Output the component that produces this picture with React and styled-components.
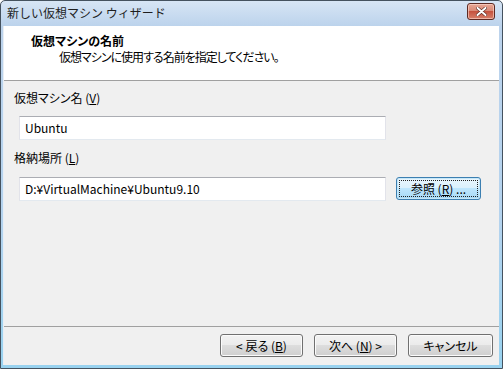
import React from "react";
import styled, { createGlobalStyle } from "styled-components";

const Global = createGlobalStyle`
  html, body { margin: 0; padding: 0; background: #ffffff; }
  body { font-family: "Noto Sans CJK JP", "Noto Sans", sans-serif; }
  * { box-sizing: border-box; }
`;

const Window = styled.div`
  width: 503px;
  height: 369px;
  border: 1px solid #45525f;
  border-radius: 5px 5px 0 0;
  background: linear-gradient(to bottom, #d7e5f5 0px, #bcd3ec 25px, #b4d3ee 60%, #98d2ef 100%);
  display: flex;
  flex-direction: column;
  padding: 0 3px 3px 2px;
  overflow: hidden;
`;

const TitleBar = styled.div`
  height: 25px;
  display: flex;
  align-items: flex-start;
  justify-content: space-between;
  padding-left: 4px;
  flex-shrink: 0;
`;

const TitleText = styled.span`
  font-size: 12px;
  line-height: 16px;
  margin-top: 4px;
  color: #1e1e1e;
`;

const CloseButton = styled.div`
  width: 28px;
  height: 17px;
  margin-top: 2px;
  margin-right: 4px;
  border: 1px solid #5d2a23;
  border-radius: 3px;
  background: linear-gradient(to bottom, #e8a795 0%, #d98b78 45%, #c5533f 50%, #d7806a 100%);
  box-shadow: inset 0 0 0 1px rgba(255, 220, 210, 0.6);
  display: flex;
  align-items: center;
  justify-content: center;
`;

const Client = styled.div`
  flex: 1;
  display: flex;
  flex-direction: column;
  background: #f0f0f0;
  border-left: 1px solid #e8eef5;
`;

const Header = styled.div`
  height: 55px;
  background: #ffffff;
  border-bottom: 1px solid #a0a0a0;
  padding: 7px 0 0 27px;
  flex-shrink: 0;
`;

const HeaderTitle = styled.div`
  font-size: 12px;
  line-height: 16px;
  font-weight: bold;
  color: #000;
  font-feature-settings: "palt" 1;
`;

const HeaderSub = styled.div`
  font-size: 12px;
  line-height: 16px;
  color: #000;
  margin-left: 28px;
  letter-spacing: -1px;
  font-feature-settings: "palt" 1;
`;

const Main = styled.div`
  flex: 1;
  padding: 9px 0 0 10px;
  display: flex;
  flex-direction: column;
`;

const Label = styled.div`
  font-size: 12px;
  line-height: 16px;
  color: #000;
  margin-top: ${(p) => p.$top || 0}px;
  font-feature-settings: "palt" 1;
`;

const Row = styled.div`
  display: flex;
  align-items: flex-start;
  gap: 10px;
  margin-top: ${(p) => p.$top || 0}px;
  margin-left: 5px;
`;

const TextBox = styled.div`
  width: 367px;
  height: 24px;
  background: #ffffff;
  border: 1px solid #e2e3ea;
  border-top-color: #abadb3;
  border-bottom-color: #e3e9ef;
  font-size: 12px;
  line-height: 22px;
  padding-left: 5px;
  color: #000;
`;

const Footer = styled.div`
  height: 39px;
  border-top: 1px solid #a0a0a0;
  display: flex;
  justify-content: flex-end;
  gap: 11px;
  padding: 7px 6px 0 0;
  flex-shrink: 0;
`;

const Button = styled.div`
  position: relative;
  width: ${(p) => p.$w || 83}px;
  height: 23px;
  border: 1px solid ${(p) => (p.$default ? "#3c7fb1" : "#707070")};
  border-radius: 3px;
  background: ${(p) =>
    p.$default
      ? "linear-gradient(to bottom, #eaf6fd 0%, #d9f0fc 50%, #bee6fd 50%, #a7d9f5 100%)"
      : "linear-gradient(to bottom, #f2f2f2 0%, #ebebeb 50%, #dddddd 50%, #cfcfcf 100%)"};
  box-shadow: inset 0 0 0 1px ${(p) => (p.$default ? "#c6e7f8" : "#fbfbfb")};
  display: flex;
  align-items: center;
  justify-content: center;
  font-size: 12px;
  line-height: 16px;
  color: #000;
  font-feature-settings: "palt" 1;

  &::after {
    content: "";
    display: ${(p) => (p.$focus ? "block" : "none")};
    position: absolute;
    inset: 2px;
    border: 1px dotted #222;
  }
`;

function CloseGlyph() {
  return (
    <svg width="11" height="9" viewBox="0 0 11 9">
      <path d="M1.5 1 L9.5 8 M9.5 1 L1.5 8" stroke="#5a2a22" strokeWidth="3.2" strokeLinecap="round" />
      <path d="M1.5 1 L9.5 8 M9.5 1 L1.5 8" stroke="#ffffff" strokeWidth="2" strokeLinecap="round" />
    </svg>
  );
}

export default function App() {
  return (
    <>
      <Global />
      <Window>
        <TitleBar>
          <TitleText>新しい仮想マシン ウィザード</TitleText>
          <CloseButton>
            <CloseGlyph />
          </CloseButton>
        </TitleBar>
        <Client>
          <Header>
            <HeaderTitle>仮想マシンの名前</HeaderTitle>
            <HeaderSub>仮想マシンに使用する名前を指定してください。</HeaderSub>
          </Header>
          <Main>
            <Label>
              仮想マシン名 (<u>V</u>)
            </Label>
            <Row $top={10}>
              <TextBox>Ubuntu</TextBox>
            </Row>
            <Label $top={10}>
              格納場所 (<u>L</u>)
            </Label>
            <Row $top={11}>
              <TextBox>D:¥VirtualMachine¥Ubuntu9.10</TextBox>
              <Button $w={85} $default $focus>
                参照 (<u>R</u>) ...
              </Button>
            </Row>
          </Main>
          <Footer>
            <Button $w={83}>
              &lt; 戻る (<u>B</u>)
            </Button>
            <Button $w={83}>
              次へ (<u>N</u>) &gt;
            </Button>
            <Button $w={85}>キャンセル</Button>
          </Footer>
        </Client>
      </Window>
    </>
  );
}
